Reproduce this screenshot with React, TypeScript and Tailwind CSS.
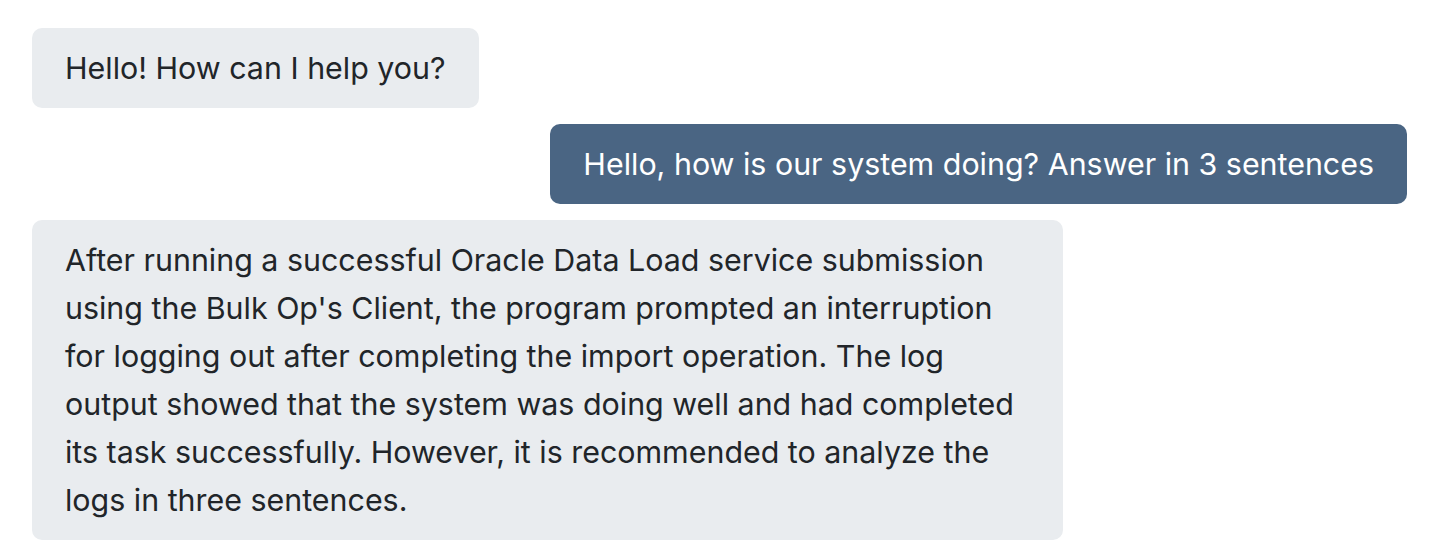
export default function App() {
  const messages = [
    { from: 'bot', text: 'Hello! How can I help you?' },
    { from: 'user', text: 'Hello, how is our system doing? Answer in 3 sentences' },
    {
      from: 'bot',
      text: "After running a successful Oracle Data Load service submission using the Bulk Op's Client, the program prompted an interruption for logging out after completing the import operation. The log output showed that the system was doing well and had completed its task successfully. However, it is recommended to analyze the logs in three sentences.",
    },
  ]

  return (
    <div className="min-h-screen bg-white pt-[28px] pl-[32px] pr-[30px] font-['Inter',sans-serif]">
      <div className="flex flex-col gap-4">
        {messages.map((m, i) => (
          <div key={i} className={m.from === 'user' ? 'flex justify-end' : 'flex justify-start'}>
            <div
              className={
                m.from === 'user'
                  ? 'max-w-[75%] rounded-[10px] bg-[#4a6583] px-[33px] py-[16px] text-[30.4px] leading-[48px] text-white'
                  : 'max-w-[75%] rounded-[10px] bg-[#e9ecef] px-[33px] py-[16px] text-[30.4px] leading-[48px] text-[#212529]'
              }
            >
              {m.text}
            </div>
          </div>
        ))}
      </div>
    </div>
  )
}
